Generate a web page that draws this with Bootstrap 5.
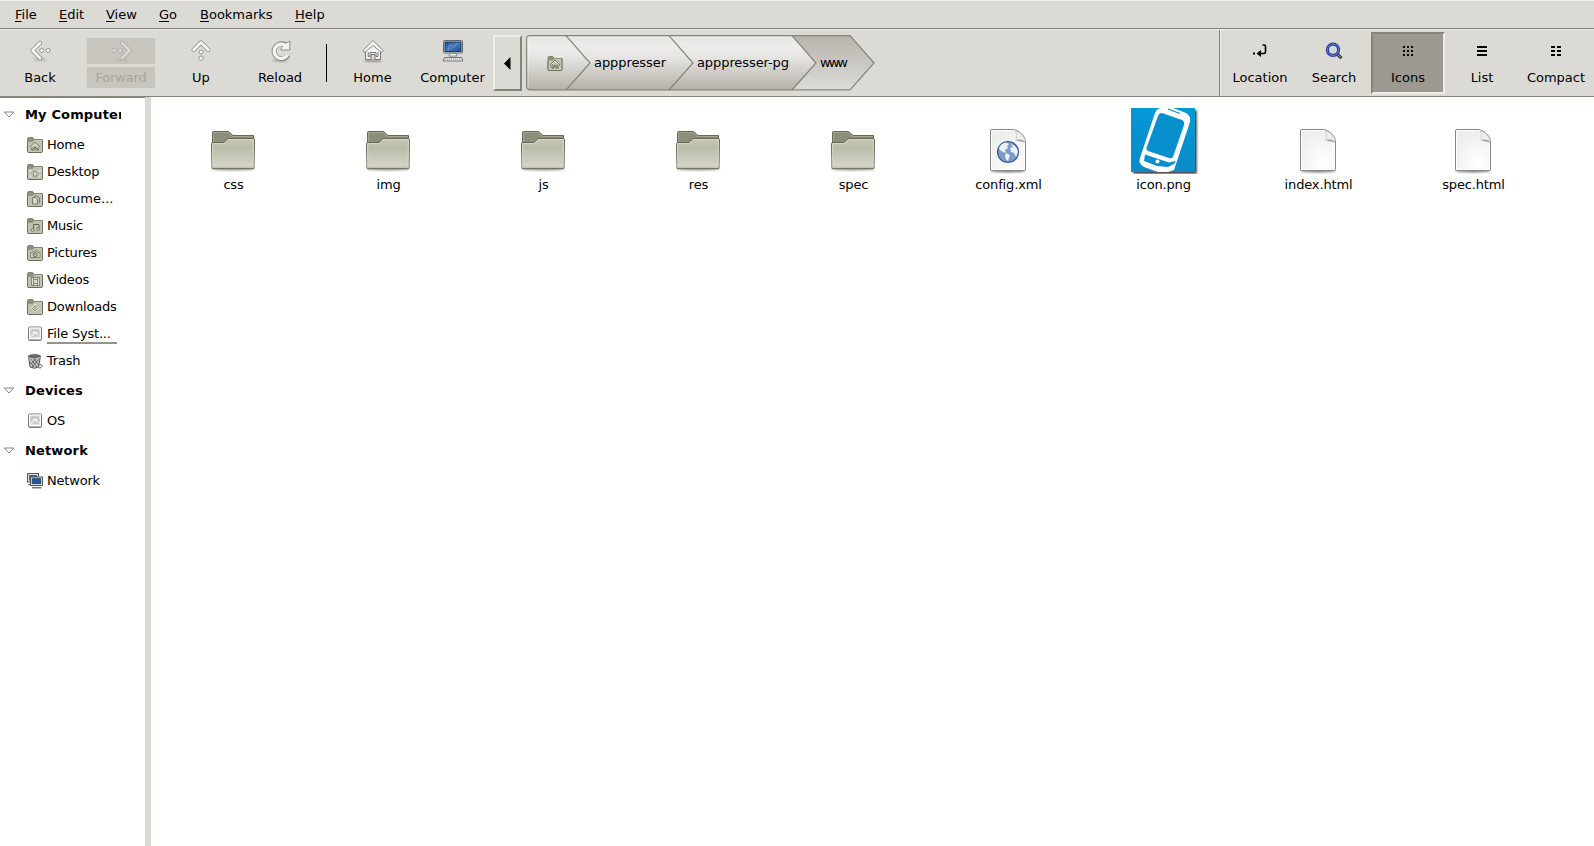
<!DOCTYPE html>
<html lang="en">
<head>
<meta charset="utf-8">
<title>www</title>
<link href="https://cdn.jsdelivr.net/npm/bootstrap@5.3.0/dist/css/bootstrap.min.css" rel="stylesheet">
<style>
body{font:13px/16px "DejaVu Sans",sans-serif;color:#000;height:846px;overflow:hidden;background:#fff}
svg{display:block;flex:none}
.menubar{height:29px;background:#dbdad5;border-top:1px solid #eeedeb;border-bottom:1px solid #87837a;padding:6px 0 0 15px}
.menubar a{color:#000;text-decoration:none;white-space:nowrap;flex:none}
.menubar u{text-underline-offset:2px;text-decoration-thickness:1px}
.m1{width:44px}.m2{width:47px}.m3{width:53px}.m4{width:41px}.m5{width:95px}
.toolbar{height:68px;background:#dbdad5;border-top:1px solid #eeedeb;border-bottom:1px solid #87837a}
.tool{width:80px;height:60px;flex:none;padding-top:9px}
.tool svg{margin-bottom:5px}
.tool span{height:21px;padding-top:2px}
.tool.off{width:68px;margin:0 6px 0 7px;padding-top:8px;color:#a8a49e}
.off svg{width:68px;height:26px;background:#c8c4be;margin-bottom:3px}
.off span{width:68px;background:#c8c4be;text-align:center;padding-top:3px;letter-spacing:-.15px}
.vline{width:1px;height:38px;background:#000;margin:14px 6px 0 7px;flex:none}
.scroll{width:29px;height:56px;margin-top:5px;border:2px solid #eeedeb;border-right-color:#87837a;border-bottom-color:#87837a;background:#dbdad5;flex:none}
.crumbs{margin:5px 0 0 4px;width:350px;height:56px;flex:none}
.views{border-left:1px solid #87837a;box-shadow:inset 1px 0 #eeedeb;height:66px;width:375px;flex:none;padding-left:3px}
.view{width:74px;height:62px;margin-top:2px;padding-top:10px;flex:none}
.view svg{margin-bottom:10px}
.view.sel{background:#9d9890;border:2px solid #87837a;border-right-color:#eeedeb;border-bottom-color:#eeedeb;padding-top:8px}
.side{width:145px;border-top:1px solid #87837a;flex:none}
.grip{width:6px;background:#dbdad5;flex:none}
.head{height:33px;font-weight:700;padding-left:3px}
.head svg{margin-right:10px}
.head span{width:96px;overflow:hidden;white-space:nowrap;letter-spacing:.15px}
.place{height:27px;padding-left:27px;letter-spacing:-.2px}
.place svg{margin-right:4px}
.place span{white-space:nowrap}
.hover span{border-bottom:2px solid #96928a;width:70px;height:21px;padding-top:3px}
.files{padding:11px 0 0 5px}
.file{width:155px;flex:none}
.file .pic{height:66px;margin-left:-2px}
.file .pic .dir{margin-bottom:2px}
.file .thumb{margin-left:4px}
.file span{margin-top:3px;letter-spacing:-.15px}
</style>
</head>
<body>
<svg width="0" height="0" class="position-absolute">
<defs>
<linearGradient id="gc" x2="0" y2="1"><stop stop-color="#e4e3e1"/><stop offset=".15" stop-color="#edecea"/><stop offset=".35" stop-color="#e9e8e6"/><stop offset=".9" stop-color="#bdb9b2"/><stop offset="1" stop-color="#b5b1aa"/></linearGradient>
<linearGradient id="gs" x2="0" y2="1"><stop stop-color="#b8b4ad"/><stop offset="1" stop-color="#dddcd8"/></linearGradient>
<linearGradient id="gf" x2="0" y2="1"><stop stop-color="#c6c7b5"/><stop offset=".3" stop-color="#bbbca8"/><stop offset=".8" stop-color="#cecfc0"/><stop offset=".9" stop-color="#d6d7ca"/><stop offset="1" stop-color="#b4b69f"/></linearGradient>
<linearGradient id="gb" x2="1" y2="1"><stop stop-color="#1d4480"/><stop offset=".5" stop-color="#4b7cbc"/><stop offset="1" stop-color="#1d4480"/></linearGradient>
<radialGradient id="gp" cx=".65" cy=".8" r=".8"><stop stop-color="#fff"/><stop offset="1" stop-color="#eceeec"/></radialGradient>
<linearGradient id="gi" x2="0" y2="1"><stop stop-color="#0498d6"/><stop offset="1" stop-color="#0a8bc8"/></linearGradient>
<filter id="bl" x="-20%" y="-100%" width="140%" height="300%"><feGaussianBlur stdDeviation="1"/></filter>
<symbol id="sf" viewBox="0 0 16 16"><path d="M.6 14V1.6Q.6.6 1.6.6H5.6L7.2 2.6H15.4V14Q15.4 15.4 14 15.4H2Q.6 15.4.6 14Z" fill="#8f917c" stroke="#7c7e6a"/><path d="M1.2 5.4H5.6L7.3 3.5H15V14.8H1.2Z" fill="#bfc1af" stroke="#d4d5c7" stroke-width=".7"/><path d="M.5 5V14.5Q.6 15.5 1.6 15.5H14.4Q15.5 15.5 15.5 14.4V3" fill="none" stroke="#6c6e5b"/></symbol>
<symbol id="folder" viewBox="0 0 46 42"><ellipse cx="23" cy="39" rx="22" ry="1.5" fill="#555" opacity=".6" filter="url(#bl)"/><path d="M2.5 14V2.5Q2.5 1.5 3.5 1.5H18.5L23 5.5H43.5V16H2.5Z" fill="#8b8e78" stroke="#656853"/><path d="M3.6 12V2.6H18L22.5 6.6H42.5" fill="none" stroke="#a9ac97" stroke-width=".8"/><path d="M1.5 14Q1.5 12.5 3 12.5H14L18 8.5H43Q44.5 8.5 44.5 10L44 38Q44 38.7 43 38.7H3Q2 38.7 2 38Z" fill="url(#gf)" stroke="#656853"/><path d="M2.8 37.5L2.6 13.6H14.5L18.5 9.6H43.4L43 37.5" fill="none" stroke="#d9dacd" stroke-width=".9"/></symbol>
<symbol id="page" viewBox="0 0 40 46"><ellipse cx="20" cy="43" rx="18" ry="1.5" fill="#444" opacity=".7" filter="url(#bl)"/><path d="M2.5 3Q2.5 1.5 4 1.5H25C31 2 37.5 8 37.5 14V41.5Q37.5 42.5 36.5 42.5H3.5Q2.5 42.5 2.5 41.5Z" fill="url(#gp)" stroke="#858683"/><path d="M3.6 41.4V2.6H25C31 3.5 36.4 9 36.4 14V41.4Z" fill="none" stroke="#fff"/><path d="M27 3C29.5 6 28.5 9.5 27.8 12.2C31 11 35 11.5 37 14C37 9 32 4 27 3Z" fill="#eeefed" stroke="#c4c5c2" stroke-width=".7"/><path d="M28 12.5C31 11 35 11.5 37 14.5L33 13.5Z" fill="#9c9d9a"/></symbol>
<symbol id="disk" viewBox="0 0 16 16"><rect x="1.5" y="1" width="13" height="13.5" rx="1.3" fill="#eee" stroke="#777"/><rect x="2.5" y="2" width="11" height="10.5" fill="#e4e4e4" stroke="#fff" stroke-width=".8"/><rect x="3.5" y="3" width="9" height="8" rx="2" fill="#cfcfcf"/><ellipse cx="8" cy="6.7" rx="3.5" ry="2.2" fill="#e8e8e8" stroke="#aaa" stroke-width=".7"/><path d="M4 10.5L8 7L11 9" fill="none" stroke="#fff"/><path d="M2 13.8H14" stroke="#999"/></symbol>
<symbol id="tri" viewBox="0 0 12 8"><path d="M1.2 1H10.8L6 6Z" fill="#fff" stroke="#89857c"/></symbol>
<symbol id="arr" viewBox="0 0 24 24"><ellipse cx="12" cy="20.5" rx="7" ry="1.2" fill="#777" opacity=".5" filter="url(#bl)"/><path d="M12 4L4.5 11.5L12 19" fill="none" stroke="#8c8c89" stroke-width="4.2" stroke-linejoin="round" stroke-linecap="round"/><path d="M12 4L4.5 11.5L12 19" fill="none" stroke="#f8f8f7" stroke-width="2.6" stroke-linejoin="round" stroke-linecap="round"/><g fill="#f8f8f7" stroke="#8c8c89" stroke-width=".9"><circle cx="13.7" cy="11.5" r="2"/><circle cx="20" cy="11.5" r="2.1"/></g></symbol>
</defs>
</svg>

<nav class="menubar d-flex">
<a class="m1"><u>F</u>ile</a><a class="m2"><u>E</u>dit</a><a class="m3"><u>V</u>iew</a><a class="m4"><u>G</u>o</a><a class="m5"><u>B</u>ookmarks</a><a><u>H</u>elp</a>
</nav>

<div class="toolbar d-flex">
<div class="tool d-flex flex-column align-items-center"><svg width="24" height="24"><use href="#arr"/></svg><span>Back</span></div>
<div class="tool off d-flex flex-column align-items-center"><svg viewBox="0 0 68 26"><g opacity=".42" transform="matrix(-1 0 0 1 47 1)"><use href="#arr" width="24" height="24"/></g></svg><span>Forward</span></div>
<div class="tool d-flex flex-column align-items-center"><svg width="24" height="24" viewBox="0 0 24 24"><g transform="translate(0 -1)"><path d="M4.5 12L12 4.5L19.5 12" fill="none" stroke="#8c8c89" stroke-width="4.2" stroke-linejoin="round" stroke-linecap="round"/><path d="M4.5 12L12 4.5L19.5 12" fill="none" stroke="#f8f8f7" stroke-width="2.6" stroke-linejoin="round" stroke-linecap="round"/><g fill="#f8f8f7" stroke="#8c8c89" stroke-width=".9"><circle cx="12" cy="14" r="2"/><circle cx="12" cy="20.2" r="2.2"/></g></g></svg><span>Up</span></div>
<div class="tool d-flex flex-column align-items-center" style="width:78px"><svg width="24" height="24" viewBox="0 0 24 24"><ellipse cx="12" cy="21.5" rx="8" ry="1.2" fill="#777" opacity=".6" filter="url(#bl)"/><g fill="none" stroke-linejoin="round" transform="translate(1 0)"><path d="M19.2 16.2A7.6 7.6 0 1 1 16.6 5.8" stroke="#8c8c89" stroke-width="5"/><path d="M20.8 2.2V11H12.2V8.8L18 3.5Z" fill="#f4f4f3" stroke="#8c8c89"/><path d="M18.6 15.8A7.2 7.2 0 1 1 17 6.8" stroke="#f5f5f4" stroke-width="3.2"/></g></svg><span>Reload</span></div>
<div class="vline"></div>
<div class="tool d-flex flex-column align-items-center" style="width:79px"><svg width="24" height="24" viewBox="0 0 24 24"><ellipse cx="12" cy="21.7" rx="9" ry="1" fill="#555" opacity=".7" filter="url(#bl)"/><path d="M4.5 10V20.5H10V15.5H14V20.5H19.5V10L12 4Z" fill="#f4f4f3" stroke="#777" stroke-width="1"/><path d="M7.2 13V17.5H9V13.5H15V17.5H17V13" fill="none" stroke="#777"/><path d="M1.7 11.8L12 1.5L22.3 11.8L20.3 13.3L12 6.5L3.7 13.3Z" fill="#f8f8f7" stroke="#858583"/></svg><span>Home</span></div>
<div class="tool d-flex flex-column align-items-center" style="width:81px"><svg width="24" height="24" viewBox="0 0 24 24"><rect x="2.5" y="1.5" width="19" height="12.5" rx="1" fill="#ddd" stroke="#67676a"/><rect x="4" y="3" width="16" height="9.5" fill="url(#gb)" stroke="#173c75"/><path d="M7 11L9 5L12 8L17 4" stroke="#77a0d6" stroke-width=".7" fill="none"/><path d="M9 14.5H15L16 17H8Z" fill="#fff" stroke="#888"/><path d="M3.5 18.5H20.5L22 22H2Z" fill="#e5e5e5" stroke="#777"/><path d="M4 20H20" stroke="#999" stroke-dasharray="1 1"/></svg><span>Computer</span></div>
<div class="scroll d-flex align-items-center justify-content-center"><svg width="7" height="13" viewBox="0 0 7 13"><path d="M6.5 0V13L0 6.5Z"/></svg></div>
<svg class="crumbs" viewBox="0 0 350 56"><path d="M266 1H324L348 28L324 55H266L290 28Z" fill="url(#gs)"/><path d="M3 1H266L290 28L266 55H3L.8 52V4Z" fill="url(#gc)"/><g fill="none" stroke="#fff" opacity=".45"><path d="M2 53V2H39M42 2H142M145 2H265"/></g><g fill="none" stroke="#87837a" stroke-width="1.2"><path d="M4 .6H324L348 28L324 54.8H4Q.6 54.8.6 51V4Q.6.6 4 .6Z"/><path d="M40 .6L64 28L40 55M143 .6L167 28L143 55M266 .6L290 28L266 55"/></g><use href="#sf" x="21" y="21" width="16" height="15"/><path d="M24 30L29 25L34 30M26 29V33H28V30.5H30V33H32V29" fill="none" stroke="#656853"/><path d="M25 29.8L29 26L33 29.8" stroke="#eee" stroke-width=".9" fill="none"/><g font-size="13"><text x="68" y="32" textLength="72">apppresser</text><text x="171" y="32" textLength="92">apppresser-pg</text><text x="294" y="32" textLength="28">www</text></g></svg>
<div class="views d-flex ms-auto">
<div class="view d-flex flex-column align-items-center"><svg width="18" height="18" viewBox="0 0 18 18"><path d="M11.5 3H13Q14.5 3 14.5 4.5V10Q14.5 11.5 13 11.5H8" fill="none" stroke="#000" stroke-width="1.6"/><path d="M10 8V15L5.5 11.5Z"/><rect x="2" y="10.5" width="2" height="2"/></svg><span>Location</span></div>
<div class="view d-flex flex-column align-items-center"><svg width="18" height="18" viewBox="0 0 18 18"><path d="M12 12L16.5 16.2" stroke="#333" stroke-width="3.2"/><path d="M12 12L16 15.5" stroke="#85827c" stroke-width="1.2"/><circle cx="8" cy="7.8" r="5.6" fill="#d8d9d6" stroke="#293e96" stroke-width="3.2"/><circle cx="8" cy="7.8" r="5.7" fill="none" stroke="#6484d0" stroke-width="1"/></svg><span>Search</span></div>
<div class="view sel d-flex flex-column align-items-center"><svg width="18" height="18" viewBox="0 0 18 18"><path d="M4 4H6V6H4ZM8 4H10V6H8ZM12 4H14V6H12ZM4 8H6V10H4ZM8 8H10V10H8ZM12 8H14V10H12ZM4 12H6V14H4ZM8 12H10V14H8ZM12 12H14V14H12Z"/></svg><span>Icons</span></div>
<div class="view d-flex flex-column align-items-center"><svg width="18" height="18" viewBox="0 0 18 18"><path d="M4 4H14V6H4ZM4 8H14V10H4ZM4 12H14V14H4Z"/></svg><span>List</span></div>
<div class="view d-flex flex-column align-items-center"><svg width="18" height="18" viewBox="0 0 18 18"><path d="M4 4H8V6H4ZM10 4H14V6H10ZM4 8H8V10H4ZM10 8H14V10H10ZM4 12H8V14H4ZM10 12H14V14H10Z"/></svg><span>Compact</span></div>
</div>
</div>

<div class="d-flex" style="height:749px">
<aside class="side">
<div class="head d-flex align-items-center"><svg width="12" height="8"><use href="#tri"/></svg><span>My Computer</span></div>
<div class="place d-flex align-items-center"><svg width="16" height="16" viewBox="0 0 16 16"><use href="#sf"/><path d="M3 10L8 5.5L13 10M4.8 9.5V13H7V10.5H9V13H11.2V9.5" fill="none" stroke="#656853" stroke-width=".9"/><path d="M3.8 10.4L8 6.7L12.2 10.4" fill="none" stroke="#eee"/></svg><span>Home</span></div>
<div class="place d-flex align-items-center"><svg width="16" height="16" viewBox="0 0 16 16"><use href="#sf"/><path d="M3 8V6.5H4.5M11.5 6.5H13V8M3 11V12.7H4.5M11.5 12.7H13V11" fill="none" stroke="#eee"/><path d="M6.5 7.5H8.5L10 9V12H6.5Z" fill="#ddd" stroke="#777a66" stroke-width=".8"/></svg><span>Desktop</span></div>
<div class="place d-flex align-items-center"><svg width="16" height="16" viewBox="0 0 16 16"><use href="#sf"/><path d="M7 5H10L12.5 7V12" fill="none" stroke="#777a66"/><path d="M5.5 6.5H8.5L10.5 8.5V13H5.5Z" fill="#d5d7c9" stroke="#656853" stroke-width=".8"/></svg><span style="letter-spacing:0">Docume...</span></div>
<div class="place d-flex align-items-center"><svg width="16" height="16" viewBox="0 0 16 16"><use href="#sf"/><path d="M6.5 12V6.5H12V11" fill="none" stroke="#656853"/><circle cx="5.5" cy="12" r="1.4" fill="#ddd" stroke="#656853" stroke-width=".8"/><circle cx="11" cy="11.2" r="1.4" fill="#ddd" stroke="#656853" stroke-width=".8"/></svg><span>Music</span></div>
<div class="place d-flex align-items-center"><svg width="16" height="16" viewBox="0 0 16 16"><use href="#sf"/><path d="M3.5 7.5H5.5L6.5 6H10L11 7.5H13V12.5H3.5Z" fill="#d0d2c3" stroke="#777a66" stroke-width=".8"/><circle cx="8.2" cy="9.7" r="2" fill="#b5b8a3" stroke="#656853"/></svg><span>Pictures</span></div>
<div class="place d-flex align-items-center"><svg width="16" height="16" viewBox="0 0 16 16"><use href="#sf"/><rect x="4.5" y="5.5" width="8" height="8" fill="#ddd" stroke="#777a66" stroke-width=".8"/><path d="M6.5 5V14M10.5 5V14M6.5 7.5H10.5M6.5 11.5H10.5" stroke="#73765f" stroke-width=".8"/></svg><span>Videos</span></div>
<div class="place d-flex align-items-center"><svg width="16" height="16" viewBox="0 0 16 16"><use href="#sf"/><path d="M8.2 5V7M4.5 8.5L8.2 12.3L12 8.5" fill="none" stroke="#e7e8df" stroke-width="2.2"/><path d="M8.2 6V7M8.2 8V9.5M5 9L8.2 12L11.5 9" fill="none" stroke="#777a66"/></svg><span>Downloads</span></div>
<div class="place hover d-flex align-items-center"><svg width="16" height="16"><use href="#disk"/></svg><span>File Syst...</span></div>
<div class="place d-flex align-items-center"><svg width="16" height="16" viewBox="0 0 16 16"><path d="M1.5 3L3 14Q7 16.5 11.5 14L13.5 3Z" fill="#c4c5c2" stroke="#555753"/><ellipse cx="7.5" cy="3" rx="6.5" ry="2.2" fill="#666863" stroke="#e4e4e2" stroke-width=".8"/><path d="M1 3Q7 7 14 3M4 6L10 14M7 6L12 12M3 9L7 14M12 6L5 14M9 6L4 11" fill="none" stroke="#50524e" stroke-width=".8"/><path d="M11 14L13 11L15.5 13L13 15.3Z" fill="#eee" stroke="#666"/></svg><span>Trash</span></div>
<div class="head d-flex align-items-center"><svg width="12" height="8"><use href="#tri"/></svg><span>Devices</span></div>
<div class="place d-flex align-items-center"><svg width="16" height="16"><use href="#disk"/></svg><span>OS</span></div>
<div class="head d-flex align-items-center"><svg width="12" height="8"><use href="#tri"/></svg><span>Network</span></div>
<div class="place d-flex align-items-center"><svg width="16" height="16" viewBox="0 0 16 16"><rect x=".5" y=".5" width="11" height="8.5" fill="#e0e0de" stroke="#555753"/><rect x="2" y="2" width="8" height="5.5" fill="#3465a4"/><path d="M1 11.5H4" stroke="#666"/><rect x="3.5" y="4" width="12" height="8.5" fill="#e8e8e6" stroke="#555753"/><rect x="5.2" y="5.7" width="8.6" height="5" fill="#27569a" stroke="#173c75" stroke-width=".8"/><path d="M5 14.7H14.5" stroke="#777" stroke-width="1.6"/></svg><span>Network</span></div>
</aside>
<div class="grip"></div>
<main class="files d-flex align-items-start">
<div class="file d-flex flex-column align-items-center"><div class="pic d-flex align-items-end"><svg class="dir" width="46" height="42"><use href="#folder"/></svg></div><span>css</span></div>
<div class="file d-flex flex-column align-items-center"><div class="pic d-flex align-items-end"><svg class="dir" width="46" height="42"><use href="#folder"/></svg></div><span>img</span></div>
<div class="file d-flex flex-column align-items-center"><div class="pic d-flex align-items-end"><svg class="dir" width="46" height="42"><use href="#folder"/></svg></div><span>js</span></div>
<div class="file d-flex flex-column align-items-center"><div class="pic d-flex align-items-end"><svg class="dir" width="46" height="42"><use href="#folder"/></svg></div><span>res</span></div>
<div class="file d-flex flex-column align-items-center"><div class="pic d-flex align-items-end"><svg class="dir" width="46" height="42"><use href="#folder"/></svg></div><span>spec</span></div>
<div class="file d-flex flex-column align-items-center"><div class="pic d-flex align-items-end"><svg width="40" height="46" viewBox="0 0 40 46"><use href="#page"/><circle cx="20" cy="24" r="10.5" fill="#7d9cc6" stroke="#3a5a8c" stroke-width="1.2"/><path d="M11 20Q13 15 18 14.5L21 16L19 18L20 20L17 22L18 25L15 24L12 22ZM18 25L22 27L20 33Q17 31 17 28ZM23 16Q29 18 30 24L28 29L26 25L23 24L22 20L25 19Z" fill="#edf1f5"/></svg></div><span>config.xml</span></div>
<div class="file d-flex flex-column align-items-center"><div class="pic d-flex align-items-end"><svg class="thumb" width="68" height="66" viewBox="0 0 68 66"><path d="M3 3H65V65H3Z" fill="#222" stroke="#444" stroke-width="1.5" filter="url(#bl)"/><rect width="64" height="64" fill="url(#gi)"/><path d="M31 0H42L55 5Q60 8 59 14L45 56L43 62L37 64H27L13 59Q7 56 9 50L24 5Q26 0 31 0Z" fill="#fff"/><path d="M31 5L51 12Q54 14 53 17L42 49Q41 51 38 50L17 43Q15 42 15.5 40L27 8Q28 5 31 5Z" fill="#078fce"/><path d="M14 46.5L38 54.5L45 53L43 56L37 59L26 58L13 53Z" fill="#078fce"/><circle cx="26.5" cy="53.5" r="2" fill="#fff"/><path d="M37 1L49 5.5" stroke="#078fce" stroke-width="1.3"/></svg></div><span>icon.png</span></div>
<div class="file d-flex flex-column align-items-center"><div class="pic d-flex align-items-end"><svg width="40" height="46"><use href="#page"/></svg></div><span>index.html</span></div>
<div class="file d-flex flex-column align-items-center"><div class="pic d-flex align-items-end"><svg width="40" height="46"><use href="#page"/></svg></div><span>spec.html</span></div>
</main>
</div>
<script src="https://cdn.jsdelivr.net/npm/bootstrap@5.3.0/dist/js/bootstrap.bundle.min.js"></script>
</body>
</html>
